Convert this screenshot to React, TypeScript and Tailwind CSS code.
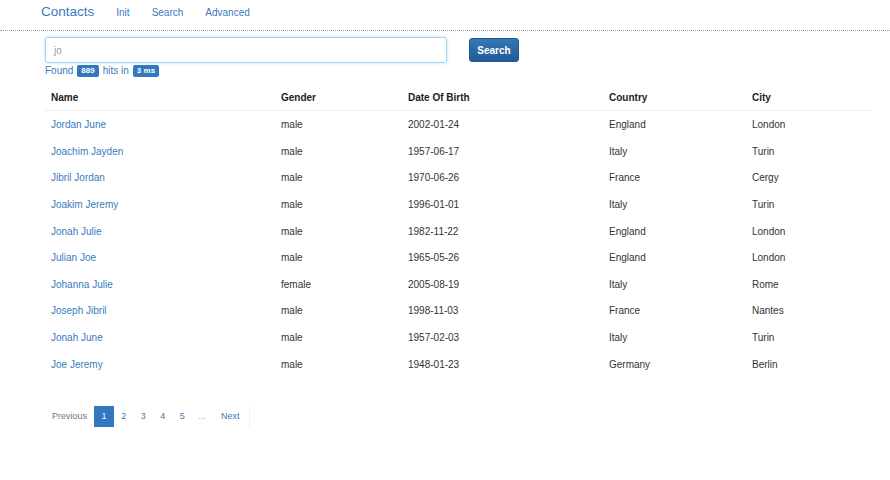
const rows = [
  ['Jordan June', 'male', '2002-01-24', 'England', 'London'],
  ['Joachim Jayden', 'male', '1957-06-17', 'Italy', 'Turin'],
  ['Jibril Jordan', 'male', '1970-06-26', 'France', 'Cergy'],
  ['Joakim Jeremy', 'male', '1996-01-01', 'Italy', 'Turin'],
  ['Jonah Julie', 'male', '1982-11-22', 'England', 'London'],
  ['Julian Joe', 'male', '1965-05-26', 'England', 'London'],
  ['Johanna Julie', 'female', '2005-08-19', 'Italy', 'Rome'],
  ['Joseph Jibril', 'male', '1998-11-03', 'France', 'Nantes'],
  ['Jonah June', 'male', '1957-02-03', 'Italy', 'Turin'],
  ['Joe Jeremy', 'male', '1948-01-23', 'Germany', 'Berlin'],
];

const cols = ['w-[230px]', 'w-[127px]', 'w-[201px]', 'w-[143px]', 'w-[126px]'];

export default function App() {
  return (
    <div className="w-[890px] h-[480px] bg-white text-[#333] font-['Liberation_Sans',Arial,sans-serif] overflow-hidden">
      {/* Navbar */}
      <div className="h-[31px] border-b border-dotted border-[#9a9a9a] flex items-center pl-[41px] pb-[5px]">
        <span className="text-[13.5px] text-[#3a7abc]">Contacts</span>
        <nav className="flex items-center text-[10px] text-[#3a7abc] ml-[22px] gap-[22px]">
          <span>Init</span>
          <span>Search</span>
          <span>Advanced</span>
        </nav>
      </div>

      <div className="pl-[45px]">
        {/* Search */}
        <div className="flex items-center mt-[6px]">
          <div className="w-[402px] h-[26px] border border-[#9fd3f0] rounded-[3px] shadow-[0_0_3px_rgba(102,175,233,0.45)] flex items-center pl-[8px] text-[10px] text-[#999]">
            jo
          </div>
          <button className="ml-[22px] w-[50px] h-[24px] rounded-[3px] bg-gradient-to-b from-[#3577b5] to-[#235c97] border border-[#1f5590] text-white text-[10px] font-bold">
            Search
          </button>
        </div>
        <div className="flex items-center text-[10px] text-[#3a7abc] mt-[1px] h-[13px]">
          <span>Found</span>
          <span className="ml-[4px] px-[4px] h-[12px] leading-[12px] rounded-[2px] bg-[#3278c0] text-white text-[8px] font-bold">889</span>
          <span className="ml-[4px]">hits in</span>
          <span className="ml-[4px] px-[4px] h-[12px] leading-[12px] rounded-[2px] bg-[#3278c0] text-white text-[8px] font-bold">3 ms</span>
        </div>

        {/* Table */}
        <div className="w-[827px] mt-[7px] text-[10px]">
          <div className="flex h-[27px] items-center border-b border-[#eeeeee] font-bold text-[#222]">
            {['Name', 'Gender', 'Date Of Birth', 'Country', 'City'].map((h, i) => (
              <div key={h} className={`${cols[i]} pl-[6px] pt-[1px]`}>{h}</div>
            ))}
          </div>
          {rows.map((r) => (
            <div key={r[0]} className="flex h-[26.6px] items-center pt-[1px]">
              {r.map((c, i) => (
                <div key={i} className={`${cols[i]} pl-[6px] ${i === 0 ? 'text-[#3a7abc]' : 'text-[#333]'}`}>{c}</div>
              ))}
            </div>
          ))}
        </div>

        {/* Pagination */}
        <div className="flex items-center mt-[29px] h-[21px] text-[9px]">
          <span className="h-full flex items-center px-[7px] text-[#777]">Previous</span>
          <span className="h-full w-[20px] flex items-center justify-center bg-[#3278c0] text-white">1</span>
          {['2', '3', '4', '5'].map((p) => (
            <span key={p} className="h-full w-[19.5px] flex items-center justify-center text-[#3a7abc]">{p}</span>
          ))}
          <span className="h-full w-[20px] flex items-center justify-center text-[#aaa]">...</span>
          <span className="h-full flex items-center px-[9px] text-[#3a7abc] border-r border-[#f0f0f0]">Next</span>
        </div>
      </div>
    </div>
  );
}
